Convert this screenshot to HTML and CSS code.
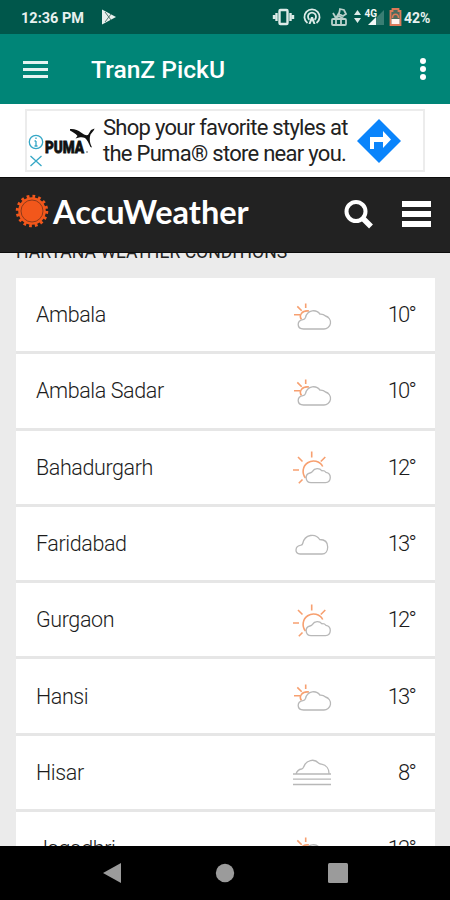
FILE: index.html
```html
<!DOCTYPE html>
<html lang="en">
  <head>
    <meta charset="utf-8">
    <meta name="viewport" content="width=device-width,initial-scale=1.0">
    <title>TranZ PickU</title>
    <link rel="stylesheet" href="styles.css">
  </head>
  <body>
    <!-- shared weather icons -->
    <svg class="sprites" width="0" height="0">
      <symbol id="mostly-cloudy" viewBox="0 0 40 36">
        <path class="sun" d="M9.500 22.500c-3-4 .500-9.500 7.500-8.500M13.700 6.500V11M5.300 9.400l4.400 4.400M2 17.700h6"/>
        <path class="cloud" d="M11.500 32h20a6.600 6.600 0 0 0 2-13c-1.500-1.400-3.500-2-5.500-1.800-3.500-5-12.500-5-14.500 3.300-.5 1.500-1 2-2.500 2.200-6.500 1-6.500 9 .500 9.300z"/>
      </symbol>
      <symbol id="partly-sunny" viewBox="0 0 40 36">
        <path class="sun" d="M13.500 29a10.400 10.400 0 1 1 17.200-11.500M19.700 2.500v6M6 8l4.500 4.500M33.300 8l-4.500 4.500M1 21h6M6.800 34.200l3.700-3.700"/>
        <path class="cloud" d="M19 33.700h14.500a5.200 5.200 0 0 0 .500-10.300c-1.200-1.400-2.600-1.900-4-1.600-2.500-3-7.500-3-9.500.6-.7 1.100-1.300 1.400-2.500 1.600-5.500 1-5 9.500 1 9.700z"/>
      </symbol>
      <symbol id="cloudy" viewBox="0 0 40 36">
        <path class="cloud" d="M8 28h22c3.500 0 5.700-3 5.700-7 0-5-3.200-7.500-8-7.500-4-6.500-15-5.500-17 4-.2 1-.7 1.500-1.700 1.700-6.500 1-6.500 8.800-1 8.800z"/>
      </symbol>
      <symbol id="fog" viewBox="0 0 40 36">
        <path class="cloud" d="M1 20h38M1 25.200h38M1 30.500h38M4 20c1-3 2.500-4.500 5.500-5 1-.2 1.500-.7 2-1.700C14 5.500 22.500 4.500 26.500 9c1 1 2 1 3 1.200 5 1 7.700 5 7.500 9.800"/>
      </symbol>
    </svg>

    <header class="status">
      <span class="clock">12:36 PM</span>
      <svg class="play" width="18" height="18" viewBox="0 0 18 18"><path d="M2 1.500L16 9 2 16.500z" fill="#e8f1ef"/><path d="M5 4l6 8M5 14l6-8" stroke="#51776f"/></svg>
      <svg class="tray" width="133" height="24" viewBox="0 0 133 24">
        <g fill="none" stroke="#dcebe8" stroke-width="2.400">
          <rect x="7.500" y="5" width="8" height="14" rx="1"/>
          <path d="M4.500 8v8M18.500 8v8M2 10v4M21 10v4"/>
          <path d="M35.500 18a7.600 7.600 0 1 1 9 0M37.500 14.800a4 4 0 1 1 5 0" stroke-width="1.800"/>
        </g>
        <path d="M39 12h2l2.500 7h-2l-1.500-3.500-1.500 3.500h-2z" fill="#dcebe8"/>
        <g fill="none" stroke="#b9d0cb" stroke-width="1.800">
          <path d="M61 8l3 5 3-5M68 4l4 1 2 4-3 2-4-2zM62 14l5-3 5 3"/>
          <rect x="60" y="14" width="14" height="6" rx="1"/>
          <path d="M64 14v6M69 14v6"/>
        </g>
        <path d="M82 10l3.500-5L89 10zM82 13l3.500 5L89 13z" fill="#dcebe8"/>
        <path d="M104 20h8V5l-8 8z" fill="#397e73"/>
        <path d="M96 20h8v-8z" fill="#f2f7f6"/>
        <text class="net" x="92.500" y="12">4G</text>
        <path d="M118.500 6h2V4h6v2h2v14h-10z" fill="#4a6b5e" stroke="#dc7a58" stroke-width="1.800"/>
        <path d="M119.500 14h8v5h-8z" fill="#fff3ee"/>
        <path d="M120.500 13c0-5 6-5 6 0" fill="none" stroke="#dc7a58" stroke-width="1.500"/>
      </svg>
      <span class="battery">42%</span>
    </header>

    <div class="toolbar">
      <span class="bars"><i></i><i></i><i></i></span>
      <h1>TranZ PickU</h1>
      <span class="dots"><i></i><i></i><i></i></span>
    </div>

    <aside class="ad">
      <div class="banner">
        <svg class="logo" width="72" height="60" viewBox="0 0 72 60">
          <g fill="none" stroke="#35a7c6" stroke-width="1.300">
            <circle cx="9" cy="31" r="6.700"/>
            <path d="M9 30v5M7.500 35h3M7.500 30H9M9 26.500v1.500M3.500 45l11 10M14.500 45l-11 10"/>
          </g>
          <text class="puma" x="18" y="42" textLength="39" lengthAdjust="spacingAndGlyphs">PUMA</text>
          <circle cx="60" cy="41" r="1" fill="#999"/>
          <path fill="#111" d="M43 18c4-.500 8 1 11 3.500 2.500 2 5 3 7 2.500l3-5 3.500-1.500-.500 1.500-3.500 4.500c-1 3-1 6 0 9.500l1.500 3.500-1.500-.500c-2-4-3-7-5.500-9-2-1-4-1-6-.500l-3.500 1 2-2.500c-2-3-4.500-3.500-7.500-5.500z"/>
        </svg>
        <p>Shop your favorite styles at<br>the Puma® store near you.</p>
        <svg class="go" width="44" height="44" viewBox="0 0 44 44"><path d="M22 0l22 22-22 22L0 22z" fill="#0a84fb"/><path d="M13 30V18h13v-6l8 8.500-8 8.500v-6h-9v7z" fill="#fff"/></svg>
      </div>
    </aside>

    <div class="brand">
      <svg class="sunburst" width="34" height="34" viewBox="0 0 34 34">
        <circle cx="17" cy="17" r="14" fill="none" stroke="#f2571b" stroke-width="4.500" stroke-dasharray="2.600 2.898"/>
        <circle cx="17" cy="17" r="13.800" fill="#f2571b"/>
        <circle cx="17" cy="17" r="11" fill="none" stroke="#8c3a1a"/>
      </svg>
      <span class="name">AccuWeather</span>
      <svg class="search" width="30" height="32" viewBox="0 0 30 32"><circle cx="12" cy="12.500" r="9.500" fill="none" stroke="#fff" stroke-width="4"/><path d="M18.500 19l8.500 8.500" stroke="#fff" stroke-width="5.500"/></svg>
      <span class="menu"><i></i><i></i><i></i></span>
    </div>

    <main>
      <h2>HARYANA WEATHER CONDITIONS</h2>
      <ul>
        <li><span>Ambala</span><svg><use href="#mostly-cloudy"/></svg><b>10°</b></li>
        <li><span>Ambala Sadar</span><svg><use href="#mostly-cloudy"/></svg><b>10°</b></li>
        <li><span>Bahadurgarh</span><svg><use href="#partly-sunny"/></svg><b>12°</b></li>
        <li><span>Faridabad</span><svg><use href="#cloudy"/></svg><b>13°</b></li>
        <li><span>Gurgaon</span><svg><use href="#partly-sunny"/></svg><b>12°</b></li>
        <li><span>Hansi</span><svg><use href="#mostly-cloudy"/></svg><b>13°</b></li>
        <li><span>Hisar</span><svg><use href="#fog"/></svg><b>8°</b></li>
        <li><span>Jagadhri</span><svg><use href="#mostly-cloudy"/></svg><b>12°</b></li>
      </ul>
    </main>

    <footer>
      <svg width="20" height="22" viewBox="0 0 20 22"><path d="M19 1v20L1 11z"/></svg>
      <svg width="20" height="20" viewBox="0 0 20 20"><circle cx="10" cy="10" r="9.200"/></svg>
      <svg width="20" height="20" viewBox="0 0 20 20"><rect width="20" height="20" rx="1.500"/></svg>
    </footer>
  </body>
</html>
```
FILE: styles.css
```css
html, body, h1, h2, p, ul {
    margin: 0;
    padding: 0;
}
body {
    width: 450px;
    height: 900px;
    overflow: hidden;
    display: flex;
    flex-direction: column;
    background-color: #ebebeb;
    font-family: Roboto, sans-serif;
}
svg {
    flex: none;
}
.sprites {
    position: absolute;
}
.status {
    flex: none;
    display: flex;
    align-items: center;
    height: 34px;
    padding-left: 21px;
    box-sizing: border-box;
    background-color: #00574b;
    color: #e8f1ef;
    font-size: 14.500px;
    font-weight: 700;
}
.clock {
    width: 79px;
    padding-top: 2px;
}
.tray {
    margin-left: 154px;
}
.net {
    font-size: 10px;
    font-weight: 700;
    fill: #f2f7f6;
}
.battery {
    padding-top: 2px;
    margin-left: -1px;
    font-size: 14px;
}
.toolbar {
    flex: none;
    display: flex;
    align-items: center;
    height: 70px;
    padding: 0 24px 0 23px;
    box-sizing: border-box;
    background-color: #008577;
    color: #fff;
}
.bars, .dots, .menu {
    display: flex;
    flex-direction: column;
}
.bars {
    width: 25px;
    gap: 4px;
}
.bars i {
    height: 3px;
    background-color: #e4f3f1;
}
.toolbar h1 {
    flex: 1;
    margin-left: 43px;
    padding-top: 1px;
    font-size: 24.600px;
    font-weight: 500;
}
.dots {
    gap: 2px;
}
.dots i {
    width: 6px;
    height: 6px;
    border-radius: 50%;
    background-color: #fff;
}
.ad {
    flex: none;
    height: 73px;
    padding: 5px 25px 0;
    box-sizing: border-box;
    background-color: #fff;
}
.banner {
    display: flex;
    align-items: center;
    height: 63px;
    padding-right: 22px;
    box-sizing: border-box;
    border: 2px solid #ececec;
    color: #222;
}
.banner p {
    flex: 1;
    margin-left: 4px;
    white-space: nowrap;
    font-size: 22px;
    letter-spacing: -.72px;
    line-height: 26px;
}
.puma {
    font-size: 17px;
    font-weight: 900;
    fill: #111;
    stroke: #111;
    stroke-width: .8px;
}
.brand {
    flex: none;
    display: flex;
    align-items: center;
    height: 76px;
    padding: 0 19px 0 15px;
    box-sizing: border-box;
    background-color: #222;
    border-top: 1px solid #0c0c0c;
    border-bottom: 1px solid #0c0c0c;
    color: #fff;
}
.sunburst {
    margin-bottom: 8px;
}
.name {
    flex: 1;
    margin-left: 4px;
    padding-bottom: 8px;
    font-family: Lato, sans-serif;
    font-size: 32.500px;
    font-weight: 700;
}
.search {
    margin-right: 28px;
}
.menu {
    width: 29px;
    gap: 4px;
    margin-bottom: 2px;
}
.menu i {
    height: 6px;
    background-color: #fff;
}
main {
    flex: 1;
    overflow: hidden;
    padding: 0 15px 0 16px;
}
h2 {
    height: 25px;
    margin-top: -11px;
    margin-bottom: 11px;
    color: #222;
    font-size: 17.600px;
    font-weight: 400;
    line-height: 20px;
}
ul {
    list-style: none;
}
li {
    display: flex;
    align-items: center;
    height: 76.300px;
    padding: 0 20px;
    box-sizing: border-box;
    background-color: #fff;
    border-bottom: 3px solid #e6e6e6;
    color: #1c1c1c;
    font-size: 21.500px;
    font-weight: 300;
    letter-spacing: -.4px;
}
li span {
    width: 256px;
}
li svg {
    width: 40px;
    height: 36px;
    overflow: visible;
    fill: none;
}
li b {
    flex: 1;
    text-align: right;
    font-size: 22px;
    font-weight: 300;
    letter-spacing: -1.800px;
}
.sun {
    stroke: #f7a070;
    stroke-width: 1.600px;
}
.cloud {
    stroke: #b8b8b8;
    stroke-width: 1.300px;
}
footer {
    flex: none;
    display: flex;
    align-items: center;
    gap: 93px;
    height: 54px;
    padding-left: 102px;
    background-color: #000;
    fill: #9b9b9b;
}
```
